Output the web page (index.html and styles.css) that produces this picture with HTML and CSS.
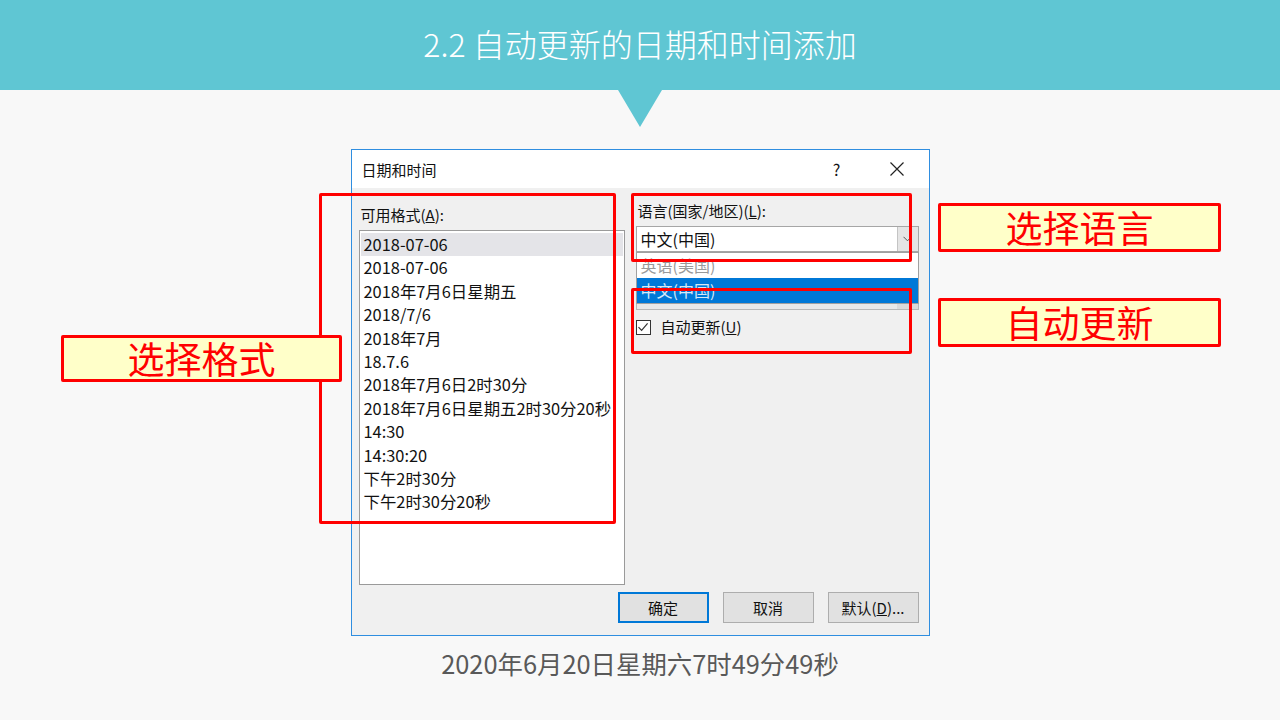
FILE: index.html
```html
<!DOCTYPE html>
<html lang="zh-CN">
<head>
    <meta charset="UTF-8">
    <meta name="viewport" content="width=device-width, initial-scale=1.0">
    <title>自动更新的日期和时间添加</title>
    <link rel="stylesheet" href="styles.css">
</head>
<body>
    <header class="banner">
        <h1>2.2 自动更新的日期和时间添加</h1>
    </header>
    <main class="stage">
        <div class="dialog">
            <div class="dialog-title">
                <span>日期和时间</span>
                <span class="title-actions">
                    <span class="help">?</span>
                    <span class="close">
                        <svg width="16" height="16" viewBox="0 0 16 16"><path d="M1.5 1.5 L14.5 14.5 M14.5 1.5 L1.5 14.5" stroke="#222" stroke-width="1.2" fill="none"/></svg>
                    </span>
                </span>
            </div>
            <div class="dialog-body">
                <div class="col-left">
                    <div class="field-label">可用格式(<u>A</u>):</div>
                    <ul class="format-list">
                        <li class="selected">2018-07-06</li>
                        <li>2018-07-06</li>
                        <li>2018年7月6日星期五</li>
                        <li>2018/7/6</li>
                        <li>2018年7月</li>
                        <li>18.7.6</li>
                        <li>2018年7月6日2时30分</li>
                        <li>2018年7月6日星期五2时30分20秒</li>
                        <li>14:30</li>
                        <li>14:30:20</li>
                        <li>下午2时30分</li>
                        <li>下午2时30分20秒</li>
                    </ul>
                </div>
                <div class="col-right">
                    <div class="field-label">语言(国家/地区)(<u>L</u>):</div>
                    <div class="combo-wrap">
                        <div class="combo">
                            <span>中文(中国)</span>
                            <span class="combo-btn">
                                <svg width="9" height="6" viewBox="0 0 9 6"><path d="M0.5 0.8 L4.5 4.8 L8.5 0.8" stroke="#555" stroke-width="1" fill="none"/></svg>
                            </span>
                        </div>
                        <ul class="dropdown">
                            <li class="faded">英语(美国)</li>
                            <li class="active">中文(中国)</li>
                        </ul>
                        <div class="ghost"><span></span></div>
                    </div>
                    <div class="check-row">
                        <span class="checkbox">
                            <svg width="12" height="12" viewBox="0 0 12 12"><path d="M1.5 6.2 L4.6 9.3 L10.6 2.4" stroke="#333" stroke-width="1.2" fill="none"/></svg>
                        </span>
                        <span>自动更新(<u>U</u>)</span>
                    </div>
                </div>
                <div class="buttons">
                    <button class="primary">确定</button>
                    <button>取消</button>
                    <button>默认(<u>D</u>)...</button>
                </div>
            </div>
        </div>
        <p class="now">2020年6月20日星期六7时49分49秒</p>
    </main>

    <div class="mark mark-format"></div>
    <div class="mark mark-lang"></div>
    <div class="mark mark-update"></div>
    <div class="tag tag-format">选择格式</div>
    <div class="tag tag-lang">选择语言</div>
    <div class="tag tag-update">自动更新</div>
</body>
</html>
```

FILE: styles.css
```css
        * {
            box-sizing: border-box;
        }
        body {
            font-family: "Noto Sans CJK SC", "Noto Sans", sans-serif;
            background-color: #f8f8f8;
            margin: 0;
            width: 1280px;
            height: 720px;
            position: relative;
            overflow: hidden;
            color: #111;
        }
        .banner {
            height: 90px;
            background: #5fc6d3;
            position: relative;
            display: flex;
            align-items: center;
            justify-content: center;
            padding-bottom: 4px;
        }
        .banner::after {
            content: '';
            position: absolute;
            left: 618px;
            top: 90px;
            border-left: 22px solid transparent;
            border-right: 22px solid transparent;
            border-top: 37px solid #5fc6d3;
        }
        .banner h1 {
            margin: 0;
            font-size: 32px;
            font-weight: 300;
            line-height: 1;
            color: #fff;
        }
        .dialog {
            width: 579px;
            height: 487px;
            margin: 59px auto 0;
            border: 1px solid #2f8ee0;
            background: #f0f0f0;
        }
        .dialog-title {
            height: 38px;
            background: #fff;
            display: flex;
            align-items: center;
            justify-content: space-between;
            padding-left: 10px;
            font-size: 15px;
        }
        .title-actions {
            display: flex;
            align-items: center;
        }
        .help {
            width: 30px;
            text-align: center;
            font-size: 16px;
            margin-right: 22px;
        }
        .close {
            width: 46px;
            margin-right: 9px;
            display: flex;
            justify-content: center;
        }
        .dialog-body {
            display: grid;
            grid-template-columns: 266px 283px;
            column-gap: 11px;
            padding: 0 10px 11px 7px;
        }
        .col-left {
            padding-top: 17px;
        }
        .col-right {
            padding-top: 13px;
        }
        .field-label {
            font-size: 15px;
            line-height: 20px;
            padding-left: 2px;
            margin-bottom: 5px;
        }
        .format-list {
            margin: 0;
            padding: 2px 1px;
            list-style: none;
            height: 355px;
            border: 1px solid #9a9a9a;
            background: #fff;
            font-size: 16.4px;
        }
        .format-list li {
            height: 23.4px;
            line-height: 23.4px;
            padding-left: 3px;
            white-space: nowrap;
        }
        .format-list li.selected {
            background: #e4e4e8;
        }
        .combo-wrap {
            position: relative;
        }
        .combo {
            height: 26px;
            border: 1px solid #a6a6a6;
            background: #fff;
            display: flex;
            align-items: center;
            padding-left: 4px;
            font-size: 16px;
        }
        .combo-btn {
            width: 21px;
            height: 24px;
            margin-left: auto;
            background: #e5e5e5;
            border-left: 1px solid #c4c4c4;
            display: flex;
            align-items: center;
            justify-content: center;
        }
        .dropdown {
            position: absolute;
            top: 26px;
            left: 0;
            width: 283px;
            margin: 0;
            padding: 0;
            list-style: none;
            background: #fff;
            border: 1px solid #a0a0a0;
            font-size: 16px;
            z-index: 2;
        }
        .dropdown li {
            height: 25px;
            line-height: 25px;
            padding-left: 4px;
        }
        .dropdown .faded {
            color: #9a9a9a;
        }
        .dropdown .active {
            background: #0078d7;
            color: #d6e8f7;
        }
        .ghost {
            position: absolute;
            top: 77px;
            left: 0;
            width: 283px;
            height: 7px;
            background: #e9e9e9;
            border: 1px solid #b8b8b8;
            border-top: none;
        }
        .ghost span {
            position: absolute;
            right: 0;
            top: 0;
            width: 21px;
            height: 6px;
            background: #dadada;
        }
        .check-row {
            display: flex;
            align-items: center;
            margin-top: 65px;
            line-height: 20px;
            font-size: 15px;
        }
        .checkbox {
            width: 15px;
            height: 15px;
            border: 1px solid #333;
            background: #fff;
            margin-right: 10px;
            display: flex;
            align-items: center;
            justify-content: center;
        }
        .buttons {
            grid-column: 1 / -1;
            display: flex;
            justify-content: flex-end;
            gap: 14px;
            margin-top: 7px;
        }
        .buttons button {
            width: 91px;
            height: 31px;
            background: #e1e1e1;
            border: 1px solid #adadad;
            font-family: inherit;
            font-size: 15px;
            color: #111;
            padding: 0;
        }
        .buttons button.primary {
            border: 2px solid #0078d7;
        }
        .now {
            margin: 12px 0 0;
            text-align: center;
            font-size: 25.4px;
            line-height: 30px;
            color: #595959;
        }
        .mark {
            position: absolute;
            border: 3px solid #ff0000;
            border-radius: 2px;
            z-index: 3;
        }
        .mark-format {
            left: 319px;
            top: 193px;
            width: 297px;
            height: 331px;
        }
        .mark-lang {
            left: 631px;
            top: 193px;
            width: 281px;
            height: 69px;
        }
        .mark-update {
            left: 631px;
            top: 288px;
            width: 281px;
            height: 66px;
        }
        .tag {
            position: absolute;
            background: #ffffc9;
            border: 3px solid #ff0000;
            border-radius: 2px;
            color: #ff0000;
            font-size: 37px;
            text-align: center;
            z-index: 4;
        }
        .tag-format {
            left: 61px;
            top: 335px;
            width: 281px;
            height: 47px;
            line-height: 41px;
        }
        .tag-lang {
            left: 938px;
            top: 203px;
            width: 283px;
            height: 49px;
            line-height: 43px;
        }
        .tag-update {
            left: 938px;
            top: 298px;
            width: 283px;
            height: 49px;
            line-height: 43px;
        }
```
